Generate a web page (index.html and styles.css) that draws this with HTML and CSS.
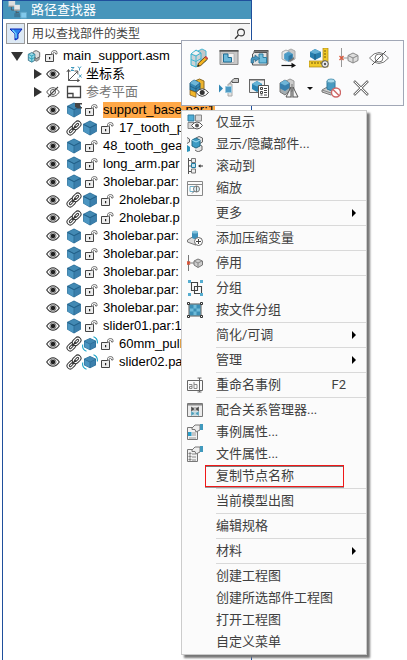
FILE: index.html
```html
<!DOCTYPE html>
<html lang="zh-CN">
<head>
<meta charset="utf-8">
<meta name="viewport" content="width=device-width, initial-scale=1">
<title>路径查找器</title>
<link rel="stylesheet" href="styles.css">
</head>
<body>
<svg class="sprite" aria-hidden="true">
  <symbol id="eye" viewBox="0 0 14 14"><path d="M.7 7C3 3.600 5 2.700 7 2.700S11 3.600 13.300 7C11 10.400 9 11.300 7 11.300S3 10.400.7 7Z" fill="#fff" stroke="#333" stroke-width="1.100"/><circle cx="7" cy="7" r="3.100" fill="#fff" stroke="#444" stroke-width=".7"/><circle cx="7" cy="7" r="2.300" fill="#222"/></symbol>
  <symbol id="eye-off" viewBox="0 0 14 14"><path d="M.7 7C3 3.600 5 2.700 7 2.700S11 3.600 13.300 7C11 10.400 9 11.300 7 11.300S3 10.400.7 7Z" fill="#fff" stroke="#555"/><circle cx="7" cy="7" r="2.500" fill="none" stroke="#555"/><path d="M2 12 12 2" stroke="#444" stroke-width="1.100"/></symbol>
  <symbol id="lock" viewBox="0 0 13 14"><path d="M.5 5.500h8v7h-8Z" fill="#ededed" stroke="#444"/><path d="M6.500 5.500V3.500Q7 1.500 9.500 1.500q2.500 0 2.500 2V5h-1.500V4q-1-1.300-2.500 0v1.500" fill="#fff" stroke="#555" stroke-width=".8"/><path d="M4 8h1.200v2.200H4Z" fill="#222"/></symbol>
  <symbol id="cube" viewBox="0 0 16 16"><path d="M8 .6 14.900 4v7.600L8 15.600 1.100 11.600V4Z" fill="#2f7099"/><path d="M8 1.200 14.200 4.200 8 7.400 1.800 4.200Z" fill="#4289b3"/><path d="M1.700 5 7.500 8v6.700L1.700 11.400Z" fill="#4b95c1"/><path d="M8.500 8 14.300 5v6.400l-5.800 3.300Z" fill="#3b7fac"/><path d="M1.500 4.300 8 7.600l6.500-3.300" fill="none" stroke="#1f5c84" stroke-width=".9"/></symbol>
  <symbol id="cube-anchor" viewBox="0 0 16 16"><use href="#cube"/><path d="M9 1h7v1.500h-2V5h2v1.500h-4L9 5Z" fill="#444"/></symbol>
  <symbol id="cube-adjust" viewBox="0 0 16 16"><path d="M8 2 14 4.800v6.400L8 14.300 2 11.200V4.800Z" fill="#2a6b94"/><path d="M8 2.600 13.500 5 8 7.800 2.500 5Z" fill="#4289b3"/><path d="m2.500 5.800 5.100 2.500v5.200l-5.100-2.600Z" fill="#4b95c1"/><path d="m8.400 8.300 5.100-2.500v5.100l-5.100 2.600Z" fill="#3b7fac"/><path d="M.8 8.500Q-.3 13.500 4.500 15.300M11.500.8Q16 2.500 15.300 7.500" fill="none" stroke="#16a3c7" stroke-width="1.100"/></symbol>
  <symbol id="link" viewBox="0 0 16 16"><g transform="rotate(-45 8 8)" fill="#fff" stroke="#333"><rect x="-.5" y="4.800" width="9.500" height="6.400" rx="3.200"/><rect x="7" y="4.800" width="9.500" height="6.400" rx="3.200"/><rect x="1.800" y="7" width="5" height="2" rx="1"/><rect x="9.200" y="7" width="5" height="2" rx="1"/><path d="M5.500 8h5" stroke-width="1.400"/></g></symbol>
  <symbol id="assembly" viewBox="0 0 16 16"><path d="M7 4Q8 1.500 11 2l3.500 2v5l-3.500 2-4-2Z" fill="#ddd" stroke="#555"/><path d="m1.500 6 4-2L9 6v7l-3.500 2-4-2Z" fill="#9adbe8" stroke="#3a7187"/><path d="m1.500 6 4 2L9 6M5.500 8v7M1.500 9.500l4 2 3.500-2" fill="none" stroke="#279ab5"/><path d="m9 10 2 1 3-2v3l-3 2-2-1Z" fill="#aaa" stroke="#555" stroke-width=".7"/></symbol>
  <symbol id="axes" viewBox="0 0 16 16"><path d="M2.500 4v10.500H13M2.500 14.500 11.500 5.500M.8 6l1.700-2.500L4.200 6M11 12.800l2.500 1.700-2.500 1.500M8.500 5h3.300v3.300" fill="none" stroke="#444" stroke-width=".9"/><path d="M5 1.500h3l-3 3h3M12 .5l1.500 2 1.500-2M13.500 2.500v2M13 8.500l2.500 3M15.500 8.500l-2.500 3" fill="none" stroke="#2c8db5" stroke-width=".9"/></symbol>
  <symbol id="plane" viewBox="0 0 16 16"><path d="M1.500 2.500h13v11h-13Z" fill="#fff" stroke="#444" stroke-width="1.300"/><path d="M2 9.500h5v4" fill="none" stroke="#444" stroke-width="1.300"/></symbol>
  <symbol id="logo" viewBox="0 0 20 19"><path d="M3 6v3.500h7M8 8v8h6M8 12h3" fill="none" stroke="#4b5961"/><path d="M0 0h7v6H0Z" fill="#ddd"/><path d="M0 5h7v1H0Z" fill="#888"/><path d="M6 4h6v6H6Z" fill="#e6e6e6"/><path d="M6 9h6v1H6Z" fill="#888"/><path d="M13 12h6v6h-6Z" fill="#81c9ec" stroke="#63aacb"/><path d="M6 13h6v4H6Z" fill="#3d7898"/></symbol>
  <symbol id="funnel" viewBox="0 0 14 14"><path d="M1 2h12L9 7v4.500L6 13V7Z" fill="#2a83ed" stroke="#0820b5"/><path d="m3.500 3 3.500 4v4" fill="none" stroke="#77d7fb" stroke-width="1.300"/></symbol>
  <symbol id="search" viewBox="0 0 12 12"><circle cx="7" cy="4.500" r="3.400" fill="none" stroke="#333" stroke-width="1.100"/><path d="M4.500 7 1 10.800" stroke="#333" stroke-width="1.300"/></symbol>

  <symbol id="t-edit" viewBox="0 0 20 20"><path d="m9 3 4-2 4 2v10l-4 2-4-2Z" fill="#c3c7c9" stroke="#4ab9d4"/><path d="m2 6 5-4 5 3v11l-5 3-5-2Z" fill="#cdd3d6" stroke="#32b4d2"/><path d="m2 6 5 2 5-3M7 8v11M2 11.500l5 2 5-3" fill="none" stroke="#3fb6d2"/><path d="m3 5.500 4-2.500 3.500 2L7 7Z" fill="#f2f6f7"/><path d="m8.500 18.500 1-3.300 7-6.700 2.300 2.300-7 6.700Z" fill="#f4b320" stroke="#5a3f14" stroke-width=".9"/><path d="m15.500 9.500 1.500-1.500 2 2-1.500 1.500Z" fill="#d84b4b"/><path d="m8.500 18.500.7-2 1.500 1.500Z" fill="#222"/></symbol>
  <symbol id="t-sheet" viewBox="0 0 20 20"><path d="M1 2.500h18v14H1Z" fill="#c9c9c9" stroke="#888"/><path d="M.5 2h19v1.700H.5Z" fill="#555"/><path d="M3 5.500h12v9H3Z" fill="#f3f3f3" stroke="#aaa" stroke-width=".7"/><path d="M4.500 6h4.500v3.500h3.500V14h-8Z" fill="#6db9da" stroke="#1f6d94"/></symbol>
  <symbol id="t-peer" viewBox="0 0 20 20"><path d="M5 3h14v13H5Z" fill="#c8c8c8" stroke="#777"/><path d="M5 2h14.500v1.500H5Z" fill="#555"/><path d="M3.500 17V6l2-1.500H18V17Z" fill="#e2e2e2" stroke="#555"/><path d="M10 6h4v3.500h3.500V15H10Z" fill="#6fbddd" stroke="#2a7fa4"/><path d="M2 15v-3.500Q2 9 5 9h1V7l4.500 3.500L6 13.500v-2H4.500V15Z" fill="#4795bf" stroke="#225f80" stroke-width=".6"/></symbol>
  <symbol id="t-move" viewBox="0 0 20 20"><path d="m8 3 4-2 4 2v8l-4 2-4-2Z" fill="#c7c9ca" stroke="#aaa"/><path d="m3 4 4-2 4 2v7l-4 2-4-2Z" fill="#e6e8e9" stroke="#aaa"/><path d="m5.500 6 4-2 4 2v5l-4 2.500-4-2.500Z" fill="#4a9bc7" stroke="#63a6c9"/><path d="m9.500 8 4-2v5l-4 2.500Z" fill="#2f77a3"/><path d="m9 12 2 2 4-3v-2l-4 3Z" fill="#777"/><path d="M2.500 17.500h12" stroke="#111" stroke-width="1.200"/><path d="m12.500 14.800 4.500 2.700-4.500 2.500Z" fill="#111"/></symbol>
  <symbol id="t-measure" viewBox="0 0 20 20"><path d="M14 0h5v19h-5ZM0 13h16v6H0Z" fill="#f1ca28" stroke="#a68413" stroke-width=".7"/><path d="M15 3h2M15 6h2M15 9h2M3 14v2M6 14v2M9 14v2M12 14v2" stroke="#725b0c"/><path d="m1 4 5-3 6 3v5l-6 3-5-3Z" fill="#277eae"/><path d="m1 4 5-3 6 3-6 2Z" fill="#64afd4"/><path d="M6 6v6" stroke="#1b567b"/><circle cx="16" cy="16" r="3.300" fill="#eee" stroke="#555"/><circle cx="16" cy="16" r="1.200" fill="#555"/></symbol>
  <symbol id="t-inactive" viewBox="0 0 20 20"><path d="M2.500 0v19M2.500 10H9" fill="none" stroke="#999"/><path d="m.5 8 4 4m0-4-4 4" stroke="#dc5638" stroke-width="1.300"/><path d="m9 7.500 5-2.500 5 2.500v5L14 15l-5-2.500Z" fill="#ddd" stroke="#888"/><path d="m9 7.500 5 2.500 5-2.500M14 10v5" fill="none" stroke="#888"/></symbol>
  <symbol id="t-hide" viewBox="0 0 20 20"><path d="M.5 10Q5 4.500 10 4.500t9.500 5.500Q15 15.500 10 15.500T.5 10Z" fill="#fff" stroke="#777"/><circle cx="10" cy="10" r="4" fill="none" stroke="#777"/><path d="M3 17 17 3" stroke="#555"/></symbol>
  <symbol id="t-show" viewBox="0 0 20 20"><path d="m7 2.500 3.500-1.500L15 3v9l-4 3-4-2Z" fill="#edb32d" stroke="#8a6a24"/><path d="m1 5 4-3 6 3v6.500L7 14l-6-2Z" fill="#3587b5" stroke="#235e82"/><path d="m1 5 4-3 6 3-4 3Z" fill="#6fb6d8"/><path d="m7 8 4-3M7 8v6M1 8l6 3 4-3" fill="none" stroke="#1d5679" stroke-width=".7"/><path d="m1 12 6 2.300v5L1 17Z" fill="#f3b72a" stroke="#76531c" stroke-width=".7"/><path d="M7 14.500Q10 10.800 13.200 10.800t6.300 3.700q-3 3.800-6.300 3.800T7 14.500Z" fill="#fff" stroke="#444"/><circle cx="13.200" cy="14.500" r="2.500" fill="#333"/></symbol>
  <symbol id="t-goto" viewBox="0 0 20 20"><path d="m0 6.500 4 4-4 4Z" fill="#2f86b4"/><path d="M9 6h4v12H9Z" fill="#e0e0e0" stroke="#aaa"/><path d="M6.500 8.500h6v6h-6Z" fill="#4d9ac4" stroke="#9ccae0"/><path d="M11 6V4.500l3-2" fill="none" stroke="#777"/><path d="m13 2.500 2-2h4.500v4H13Z" fill="#c9c9c9" stroke="#555"/></symbol>
  <symbol id="t-props" viewBox="0 0 20 20"><path d="M.5 1.500h15v13H.5Z" fill="#efefef" stroke="#666"/><path d="M0 1h16v1.500H0Z" fill="#666"/><path d="m3 6 5-3 5 3v5l-5 3-5-3Z" fill="#2983b2"/><path d="m3 6 5-3 5 3-5 2.500Z" fill="#65b2d5"/><path d="M9.500 7.500h10v12h-10Z" fill="#fff" stroke="#555"/><path d="M11.500 9.500h2v2h-2Zm0 4h2v2h-2Zm0 3.500h2M15 10.500h3m-3 2h3m-3 2h3m-3 2.500h3" fill="none" stroke="#444"/></symbol>
  <symbol id="t-mirror" viewBox="0 0 20 20"><path d="m7 3 4-2 4 2v9l-4 2Z" fill="#ccc" stroke="#999"/><path d="m1 5 5-3 4.500 3v8L6 17l-5-3Z" fill="#a4adb1" stroke="#777"/><path d="m1 5 5-3 4.500 3v5L6 13l-5-2.500Z" fill="#377fae"/><path d="m1 5 5-3 4.500 3L6 7.500Z" fill="#6fb5d8"/><path d="m7 19 5-10v10Zm12 0-5-10v10Z" fill="#f4f4f4" stroke="#555"/><path d="M13 6v14" stroke="#777"/></symbol>
  <symbol id="t-suppress" viewBox="0 0 20 20"><path d="m1 12 7-4 10 4-8 5-9-3Z" fill="#ccc" stroke="#777"/><path d="m1 12 9 3 8-3" fill="none" stroke="#888"/><path d="M6 3v8q4 3 8 0V3Z" fill="#489ac1" stroke="#337b9e"/><ellipse cx="10" cy="3" rx="4" ry="2" fill="#a7d8eb" stroke="#5b9db9"/><circle cx="15" cy="14.500" r="4.500" fill="#fff" stroke="#ce6767" stroke-width="1.400"/><path d="m12 11.500 6 6" stroke="#ce6767" stroke-width="1.400"/></symbol>
  <symbol id="t-delete" viewBox="0 0 20 20"><path d="m3 3 14 14m0-14L3 17" stroke="#777" stroke-width="2.600"/><path d="m3.700 3.700 12.600 12.600m0-12.600L3.700 16.300" stroke="#fff"/></symbol>

  <symbol id="m-show" viewBox="0 0 16 16"><path d="M1 1h6v6H1Z" fill="#4eacd5" stroke="#327d9e"/><path d="M8.500 1h6v6h-6ZM1 8.500h6v6H1Z" fill="#d8d8d8" stroke="#888"/><path d="M4.500 11.500Q7 8 10 8t5.500 3.500Q13 15 10 15t-5.500-3.500Z" fill="#fff" stroke="#555"/><circle cx="10" cy="11.500" r="2" fill="#555"/></symbol>
  <symbol id="m-parts" viewBox="0 0 16 16"><path d="M0 1.500 2.500 3v3L0 7.500M9 2l3-1.500L15.500 2v4L12 8M7 10l4-2 4 2v4l-4 2-3-2" fill="#e5e5e5" stroke="#666"/><path d="m5 4 4-2 4 2v6l-4 2-4-2Z" fill="#3c9bc4" stroke="#236984"/><path d="m5 4 4 2 4-2" fill="none" stroke="#a2dcf0"/><path d="m0 9 3 2v4l-3 1Z" fill="#2d93b9"/></symbol>
  <symbol id="m-scroll" viewBox="0 0 16 16"><path d="M1.500 0v16M1.500 2.500h3M1.500 8h3M1.500 13.500h3" stroke="#555"/><path d="M4.500.5h4v4h-4ZM4.500 11h4v4h-4Z" fill="#eee" stroke="#777"/><path d="M4.500 5.500h4v4h-4Z" fill="#c4e3ef" stroke="#247ca1"/><path d="m11 8 2.500-1.800V7.500H16v1h-2.500v1.300Z" fill="#333"/></symbol>
  <symbol id="m-zoom" viewBox="0 0 16 16"><path d="M.5 1.500h15v14H.5ZM.5 4.500h15" fill="none" stroke="#888"/><path d="M3 6.500h5v5H3Z" fill="#fff" stroke="#6fb1cb"/><circle cx="9.500" cy="9" r="3" fill="#dbeef4" stroke="#777"/><path d="M7.500 11 5 13.500M9.500 6v6" stroke="#777"/></symbol>
  <symbol id="m-variable" viewBox="0 0 16 16"><path d="m.5 10 5-3 9 3-6 5-8-3Z" fill="#ddd" stroke="#777"/><path d="M5 2v6q3 2 6 0V2Z" fill="#3d8fb9"/><ellipse cx="8" cy="2" rx="3" ry="1.500" fill="#85c4dd"/><circle cx="11.500" cy="11.500" r="4" fill="#fff" stroke="#666"/><path d="M11.500 9v5M9 11.500h5" stroke="#444"/></symbol>
  <symbol id="m-inactive" viewBox="0 0 16 16"><path d="M1.500 0v16M1.500 8H8" fill="none" stroke="#777"/><path d="m0 6.500 3 3m0-3-3 3" stroke="#dc4b2c" stroke-width="1.300"/><path d="m7 6 4-2 4.500 2v4L11 12.500 7 10Z" fill="#ccc" stroke="#777"/><path d="m7 6 4 2 4-2M11 8v4" fill="none" stroke="#888"/></symbol>
  <symbol id="m-group" viewBox="0 0 16 16"><path d="M4.500 2.500h6v8h-6ZM7.500 6.500h7v7h-7Z" fill="none" stroke="#444" stroke-width="1.100"/><path d="M1 0h3v3H1Zm12 0h3v3h-3ZM1 13h3v3H1Zm12 0h3v3h-3Z" fill="#55add0"/></symbol>
  <symbol id="m-filegroup" viewBox="0 0 16 16"><path d="M2 2h12v12H2Z" fill="#6fbbd9" stroke="#555"/><path d="M3 3h3.500v3.500H3Zm6.500 0H13v3.500H9.500ZM3 9.500h3.500V13H3Zm6.500 0H13V13H9.500ZM6.500 6.500h3v3h-3Z" fill="#3c8fb6"/><path d="M.5.500h2v2h-2Zm13 0h2v2h-2Zm-13 13h2v2h-2Zm13 0h2v2h-2Z" fill="#fff" stroke="#333"/></symbol>
  <symbol id="m-rename" viewBox="0 0 16 16"><path d="M12 3.500H.5v10H12M13 3.500h2.500v10H13M10.500 1h4M12.500 1v14M10.500 15h4" fill="none" stroke="#666"/><path d="M2 7.500h3v4H2.500v-2H5M7 5v6.500h3v-4H7" fill="none" stroke="#888"/></symbol>
  <symbol id="m-relations" viewBox="0 0 16 16"><path d="M.5 1.500h15v13H.5Z" fill="#ececec" stroke="#777"/><path d="M1 2h14v1.500H1Z" fill="#888"/><path d="M4.500 5v4L7 7Zm7 0v4L9 7ZM7 5v4M9 5v4" fill="#444" stroke="#444" stroke-width=".6"/><path d="M4.500 9.500v4l2.500-2Zm7 0v4l-2.500-2ZM7 9.500v4m2-4v4" fill="#4a9dbb" stroke="#4a9dbb" stroke-width=".6"/></symbol>
  <symbol id="m-occprops" viewBox="0 0 16 16"><path d="M.5 3.500h10v12H.5Z" fill="#f2f2f2" stroke="#777"/><path d="M5 9h4m-4 2h4m-7 3h7" stroke="#999"/><path d="M1 8h3.500v4H1Z" fill="#299dc8"/><path d="M5 4 8 1h5v5L9 8 8 5.500H5Z" fill="#eee" stroke="#777"/><path d="M13 0h3v6h-3Z" fill="#4099bd"/></symbol>
  <symbol id="m-fileprops" viewBox="0 0 16 16"><path d="M.5 3.500h10v12H.5Z" fill="#f2f2f2" stroke="#777"/><path d="M2 7h2v1H2Zm0 3h2v1H2Zm0 3h2v1H2ZM5 8h4m-4 3h4m-4 3h4" fill="#777" stroke="#888"/><path d="M5 4 8 1h5v5L9 8 8 5.500H5Z" fill="#eee" stroke="#777"/><path d="M13 0h3v6h-3Z" fill="#4099bd"/></symbol>
</svg>

<main class="pathfinder">
  <header class="title"><svg class="logo"><use href="#logo"/></svg><h1>路径查找器</h1></header>
  <form class="search" role="search">
    <button type="button" class="filter" aria-label="筛选"><svg class="i14"><use href="#funnel"/></svg></button>
    <div class="field">
      <input type="text" aria-label="用以查找部件的类型" placeholder="用以查找部件的类型">
      <button type="button" class="find" aria-label="查找"><svg class="i12"><use href="#search"/></svg></button>
    </div>
  </form>
  <ul class="tree">
    <li class="row root"><span class="down"></span><svg class="i14"><use href="#assembly"/></svg><svg class="lock"><use href="#lock"/></svg><span class="name">main_support.asm</span></li>
    <li class="row"><span class="right"></span><svg class="i14"><use href="#eye"/></svg><svg class="i16"><use href="#axes"/></svg><span class="cn">坐标系</span></li>
    <li class="row muted"><span class="right"></span><svg class="i14"><use href="#eye-off"/></svg><svg class="i16"><use href="#plane"/></svg><span class="cn">参考平面</span></li>
    <li class="row part"><svg class="i14"><use href="#eye"/></svg><svg class="i16"><use href="#cube-anchor"/></svg><svg class="lock"><use href="#lock"/></svg><span class="name selected">support_base.par:1</span></li>
    <li class="row part"><svg class="i14"><use href="#eye"/></svg><svg class="i16"><use href="#link"/></svg><svg class="i16 linked"><use href="#cube"/></svg><svg class="lock"><use href="#lock"/></svg><span class="name">17_tooth_p</span></li>
    <li class="row part"><svg class="i14"><use href="#eye"/></svg><svg class="i16"><use href="#cube"/></svg><svg class="lock"><use href="#lock"/></svg><span class="name">48_tooth_gea</span></li>
    <li class="row part"><svg class="i14"><use href="#eye"/></svg><svg class="i16"><use href="#cube"/></svg><svg class="lock"><use href="#lock"/></svg><span class="name">long_arm.par</span></li>
    <li class="row part"><svg class="i14"><use href="#eye"/></svg><svg class="i16"><use href="#cube"/></svg><svg class="lock"><use href="#lock"/></svg><span class="name">3holebar.par:</span></li>
    <li class="row part"><svg class="i14"><use href="#eye"/></svg><svg class="i16"><use href="#link"/></svg><svg class="i16 linked"><use href="#cube"/></svg><svg class="lock"><use href="#lock"/></svg><span class="name">2holebar.p</span></li>
    <li class="row part"><svg class="i14"><use href="#eye"/></svg><svg class="i16"><use href="#link"/></svg><svg class="i16 linked"><use href="#cube"/></svg><svg class="lock"><use href="#lock"/></svg><span class="name">2holebar.p</span></li>
    <li class="row part"><svg class="i14"><use href="#eye"/></svg><svg class="i16"><use href="#cube"/></svg><svg class="lock"><use href="#lock"/></svg><span class="name">3holebar.par:</span></li>
    <li class="row part"><svg class="i14"><use href="#eye"/></svg><svg class="i16"><use href="#cube"/></svg><svg class="lock"><use href="#lock"/></svg><span class="name">3holebar.par:</span></li>
    <li class="row part"><svg class="i14"><use href="#eye"/></svg><svg class="i16"><use href="#cube"/></svg><svg class="lock"><use href="#lock"/></svg><span class="name">3holebar.par:</span></li>
    <li class="row part"><svg class="i14"><use href="#eye"/></svg><svg class="i16"><use href="#cube"/></svg><svg class="lock"><use href="#lock"/></svg><span class="name">3holebar.par:</span></li>
    <li class="row part"><svg class="i14"><use href="#eye"/></svg><svg class="i16"><use href="#cube"/></svg><svg class="lock"><use href="#lock"/></svg><span class="name">3holebar.par:</span></li>
    <li class="row part"><svg class="i14"><use href="#eye"/></svg><svg class="i16"><use href="#cube"/></svg><svg class="lock"><use href="#lock"/></svg><span class="name">slider01.par:1</span></li>
    <li class="row part"><svg class="i14"><use href="#eye"/></svg><svg class="i16"><use href="#link"/></svg><svg class="i16 linked"><use href="#cube-adjust"/></svg><svg class="lock"><use href="#lock"/></svg><span class="name">60mm_pull</span></li>
    <li class="row part"><svg class="i14"><use href="#eye"/></svg><svg class="i16"><use href="#link"/></svg><svg class="i16 linked"><use href="#cube-adjust"/></svg><svg class="lock"><use href="#lock"/></svg><span class="name">slider02.pa</span></li>
  </ul>
</main>

<div class="popup">
  <div class="tools" role="toolbar" aria-label="快捷命令">
    <div class="toolrow">
      <button type="button" aria-label="编辑"><svg><use href="#t-edit"/></svg></button>
      <button type="button" aria-label="草图"><svg><use href="#t-sheet"/></svg></button>
      <button type="button" aria-label="打开"><svg><use href="#t-peer"/></svg></button>
      <button type="button" aria-label="移动"><svg><use href="#t-move"/></svg></button>
      <button type="button" aria-label="测量"><svg><use href="#t-measure"/></svg></button>
      <button type="button" aria-label="停用"><svg><use href="#t-inactive"/></svg></button>
      <button type="button" aria-label="隐藏"><svg><use href="#t-hide"/></svg></button>
    </div>
    <div class="toolrow">
      <button type="button" aria-label="显示"><svg><use href="#t-show"/></svg></button>
      <button type="button" aria-label="转到"><svg><use href="#t-goto"/></svg></button>
      <button type="button" aria-label="属性"><svg><use href="#t-props"/></svg></button>
      <button type="button" aria-label="镜像"><svg><use href="#t-mirror"/></svg></button>
      <button type="button" class="drop" aria-label="更多镜像命令"><span class="caret"></span></button>
      <button type="button" aria-label="压缩"><svg><use href="#t-suppress"/></svg></button>
      <button type="button" aria-label="删除"><svg><use href="#t-delete"/></svg></button>
    </div>
  </div>
  <div class="menu" role="menu">
    <button type="button" role="menuitem"><svg><use href="#m-show"/></svg><span>仅显示</span></button>
    <button type="button" role="menuitem"><svg><use href="#m-parts"/></svg><span>显示/隐藏部件...</span></button>
    <button type="button" role="menuitem"><svg><use href="#m-scroll"/></svg><span>滚动到</span></button>
    <button type="button" role="menuitem"><svg><use href="#m-zoom"/></svg><span>缩放</span></button>
    <hr>
    <button type="button" role="menuitem" aria-haspopup="menu"><svg></svg><span>更多</span><i class="more"></i></button>
    <hr>
    <button type="button" role="menuitem"><svg><use href="#m-variable"/></svg><span>添加压缩变量</span></button>
    <hr>
    <button type="button" role="menuitem"><svg><use href="#m-inactive"/></svg><span>停用</span></button>
    <hr>
    <button type="button" role="menuitem"><svg><use href="#m-group"/></svg><span>分组</span></button>
    <button type="button" role="menuitem"><svg><use href="#m-filegroup"/></svg><span>按文件分组</span></button>
    <hr>
    <button type="button" role="menuitem" aria-haspopup="menu"><svg></svg><span>简化/可调</span><i class="more"></i></button>
    <hr>
    <button type="button" role="menuitem" aria-haspopup="menu"><svg></svg><span>管理</span><i class="more"></i></button>
    <hr>
    <button type="button" role="menuitem"><svg><use href="#m-rename"/></svg><span>重命名事例</span><kbd>F2</kbd></button>
    <hr>
    <button type="button" role="menuitem"><svg><use href="#m-relations"/></svg><span>配合关系管理器...</span></button>
    <button type="button" role="menuitem"><svg><use href="#m-occprops"/></svg><span>事例属性...</span></button>
    <button type="button" role="menuitem"><svg><use href="#m-fileprops"/></svg><span>文件属性...</span></button>
    <button type="button" role="menuitem" class="marked"><svg></svg><span>复制节点名称</span></button>
    <hr>
    <button type="button" role="menuitem"><svg></svg><span>当前模型出图</span></button>
    <hr>
    <button type="button" role="menuitem"><svg></svg><span>编辑规格</span></button>
    <hr>
    <button type="button" role="menuitem" aria-haspopup="menu"><svg></svg><span>材料</span><i class="more"></i></button>
    <hr>
    <button type="button" role="menuitem"><svg></svg><span>创建工程图</span></button>
    <button type="button" role="menuitem"><svg></svg><span>创建所选部件工程图</span></button>
    <button type="button" role="menuitem"><svg></svg><span>打开工程图</span></button>
    <button type="button" role="menuitem"><svg></svg><span>自定义菜单</span></button>
  </div>
</div>
</body>
</html>
```
FILE: styles.css
```css
* { box-sizing: border-box; }

body {
  margin: 0;
  background: #fff;
  color: #000;
  font: 13px/18px Roboto, "Noto Sans CJK SC", sans-serif;
}

button, input { font: inherit; color: inherit; }
button { padding: 0; border: 0; background: none; }
svg { display: block; flex: none; }

.sprite { position: absolute; width: 0; height: 0; }
.i12 { width: 12px; height: 12px; }
.i14 { width: 14px; height: 14px; }
.i16 { width: 16px; height: 16px; }
.lock { width: 13px; height: 14px; }

/* Tree panel */
.pathfinder {
  width: 250px;
  max-width: 100%;
  min-height: 100vh;
  margin-left: 2px;
  border: 1px solid #1f4f9c;
  border-bottom: 0;
  overflow: hidden;
}

.title {
  display: flex;
  align-items: center;
  gap: 3px;
  height: 18px;
  padding-left: 5px;
  background: #4795bb;
  color: #fff;
}
.title h1 { margin: 0; font-size: 13px; line-height: 18px; font-weight: 400; }
.logo { width: 20px; height: 18px; }

.search { display: flex; gap: 2px; margin: 4px 1px 3px 3px; }
.filter {
  display: grid;
  place-items: center;
  width: 19px;
  height: 21px;
  border: 1px solid #999;
  background: #dde9f4;
}
.field {
  display: flex;
  flex: 1;
  min-width: 0;
  height: 21px;
  border: 1px solid #777;
  border-right: 0;
}
.field input {
  flex: 1;
  min-width: 0;
  padding: 0 0 0 4px;
  border: 0;
  outline: 0;
  background: #fff;
  font-size: 12px;
}
.field input::placeholder { color: #444; opacity: 1; }
.find { display: grid; place-items: center; width: 20px; background: #f5f5f5; }

.tree { margin: 0; padding: 0; list-style: none; }
.row {
  display: flex;
  align-items: center;
  gap: 4px;
  height: 18px;
  padding-left: 31px;
  white-space: nowrap;
}
.row .i14 + .i16 { margin-left: 2px; }
.row .i16 + .lock { margin-left: -1px; }
.row .lock + .name { margin-left: 1px; }
.row .linked { margin-left: -4px; }
.row.root { padding-left: 8px; }
.row.part { padding-left: 43px; }
.row .name { font: 13px/16px "Liberation Sans", sans-serif; }
.row .cn { line-height: 16px; }
.row.muted .cn { color: #777; }
.selected { background: #ffa847; }

.down { border: 6px solid transparent; border-top: 9px solid #333; border-bottom: 0; }
.right { border: 5px solid transparent; border-left: 8px solid #333; border-right: 0; }

/* Context toolbar and menu float over the tree */
.popup {
  position: absolute;
  top: 40px;
  left: 181px;
  display: flex;
  flex-direction: column;
  align-items: flex-start;
  gap: 4px;
}

.tools {
  padding: 2px 9px 2px 2px;
  border: 1px solid #a1a7b6;
  background: #fbfbfc;
}
.toolrow { display: flex; }
.toolrow button { display: grid; place-items: center; width: 30px; height: 30px; }
.toolrow svg { width: 20px; height: 20px; }
.toolrow .drop { width: 12px; }
.caret { border: 3px solid transparent; border-top-color: #111; border-bottom: 0; }

.menu {
  width: 186px;
  padding-bottom: 1px;
  border: 1px solid #ccc;
  background: #fbfbfb;
  box-shadow: 3px 3px 2px #777;
  color: #404040;
}
.menu button {
  position: relative;
  display: flex;
  align-items: center;
  width: 100%;
  height: 22px;
  padding: 0 10px 0 5px;
  text-align: left;
  white-space: nowrap;
}
.menu svg { width: 16px; height: 16px; margin-right: 13px; }
.menu span { flex: 1; }
.menu kbd { margin-right: 10px; font: inherit; }
.menu hr { height: 1px; margin: 1px 0 1px 34px; border: 0; background: #d9d9d9; }
.more { border: 4px solid transparent; border-left-color: #000; border-right: 0; }
.marked::after {
  content: "";
  position: absolute;
  inset: 0 22px 0 23px;
  border: 1px solid #f01818;
  box-shadow: inset 0 1px #777, 0 1px #999;
}
```
